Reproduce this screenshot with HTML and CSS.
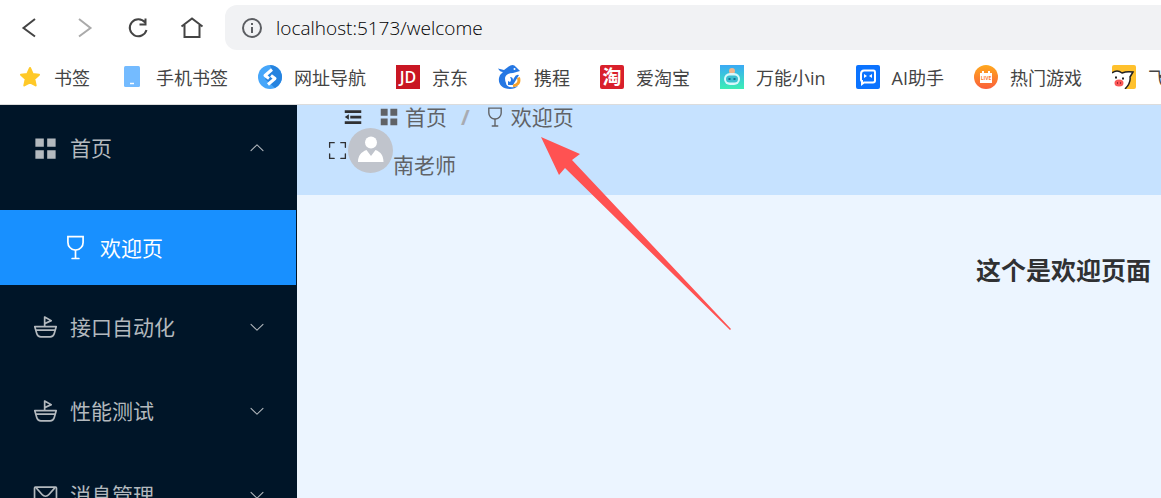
FILE: index.html
```html
<!DOCTYPE html>
<html lang="zh">
<head>
  <meta charset="UTF-8">
  <meta name="viewport" content="width=device-width, initial-scale=1.0">
  <title>欢迎页</title>
  <link rel="stylesheet" href="styles.css">
</head>
<body>
  <!-- shared icons -->
  <svg class="sprite" aria-hidden="true">
    <symbol id="menu" viewBox="0 0 1024 1024"><path d="M128 128h320v320H128zM576 128h320v320H576zM128 576h320v320H128zM576 576h320v320H576z"/></symbol>
    <symbol id="goblet" viewBox="0 0 1024 1024"><path d="M544 638.912V896h96a32 32 0 1 1 0 64H384a32 32 0 1 1 0-64h96V638.848A320 320 0 0 1 192 320V64h640v256a320 320 0 0 1-288 318.912zM256 319.68a256.128 256.128 0 0 0 256 256A256 256 0 0 0 768 320V128H256v191.68z"/></symbol>
    <symbol id="ship" viewBox="0 0 1024 1024"><path d="M512 386.88V448h405.568a32 32 0 0 1 30.72 40.768l-76.48 267.968A192 192 0 0 1 687.168 896H336.832a192 192 0 0 1-184.64-139.264L75.648 488.768A32 32 0 0 1 106.368 448H448V117.888a32 32 0 0 1 47.36-28.096l13.888 7.616L512 96v2.88l231.68 126.4a32 32 0 0 1-2.048 57.216L512 386.88zm0-70.272 144.768-65.792L512 171.84v144.768zM512 512H148.864l18.24 64H856.96l18.24-64H512zM185.408 640l28.352 99.2A128 128 0 0 0 336.832 832h350.336a128 128 0 0 0 123.072-92.8l28.352-99.2H185.408z"/></symbol>
    <symbol id="message" viewBox="0 0 1024 1024"><path d="M128 224v512a64 64 0 0 0 64 64h640a64 64 0 0 0 64-64V224H128zm0-64h768a64 64 0 0 1 64 64v512a128 128 0 0 1-128 128H192A128 128 0 0 1 64 736V224a64 64 0 0 1 64-64z"/><path d="M904 224 656.512 506.88a192 192 0 0 1-289.024 0L120 224h784zm-698.944 0 210.56 240.704a128 128 0 0 0 192.704 0L818.944 224H205.056z"/></symbol>
    <symbol id="down" viewBox="0 0 1024 1024"><path d="M831.872 340.864 512 652.672 192.128 340.864a30.592 30.592 0 0 0-42.752 0 29.12 29.12 0 0 0 0 41.6L489.664 714.24a32 32 0 0 0 44.672 0l340.288-331.712a29.12 29.12 0 0 0 0-41.728 30.592 30.592 0 0 0-42.752.064z"/></symbol>
  </svg>

  <header class="browser">
    <div class="toolbar">
      <button class="tool" aria-label="后退"><svg viewBox="0 0 24 24"><path d="M17 3 5.500 12 17 20.500"/></svg></button>
      <button class="tool disabled" aria-label="前进"><svg viewBox="0 0 24 24"><path d="M7 3 18.500 12 7 20.500"/></svg></button>
      <button class="tool" aria-label="刷新"><svg viewBox="0 0 24 24"><path d="M19 6.500A8.500 8.500 0 1 0 20.500 14M19.500 2.500v6h-6"/></svg></button>
      <button class="tool" aria-label="主页"><svg viewBox="0 0 24 24"><path d="M1.500 10.500 12 2.500l10.500 8M4.500 9v12h15V9"/></svg></button>
      <div class="address">
        <svg viewBox="0 0 20 20"><circle cx="10" cy="10" r="9"/><path d="M10 9v6M10 5v2"/></svg>
        <input type="text" value="localhost:5173/welcome" aria-label="地址栏">
      </div>
    </div>
    <nav class="bookmarks">
      <a href="#"><svg viewBox="0 0 24 24"><path fill="#ffc928" stroke="#ffc928" stroke-width="2" stroke-linejoin="round" d="m12 3 2.700 6 6.300.7-4.700 4.300 1.400 6.400L12 17.300l-5.700 3.100L7.700 14 3 9.700 9.300 9z"/></svg>书签</a>
      <a href="#"><svg viewBox="0 0 24 24"><rect x="4" y="1" width="16" height="21" rx="1.500" fill="#74bbff"/><path d="M10 18.500h4" stroke="#fff" stroke-width="1.500"/></svg>手机书签</a>
      <a href="#"><svg viewBox="0 0 24 24"><circle cx="12" cy="12" r="12" fill="#46a6fa"/><path fill="#2683df" d="M12 0a12 12 0 0 1 5 22.900L7 14l7-8z"/><path d="M14 4.500 7 10.500l4 3M10 19.500l7-6-4-3" fill="none" stroke="#fff" stroke-width="3" stroke-linejoin="round"/></svg>网址导航</a>
      <a href="#"><svg viewBox="0 0 24 24"><path fill="#c91623" d="M0 0h24v24H0z"/><text class="mark-jd" x="12" y="18">JD</text></svg>京东</a>
      <a href="#"><svg viewBox="0 0 24 24"><path fill="#2577e3" d="M0 3.500 6 5l4-3q5-4 8 0l4 4-7 2q-7 0-8 5 0 3 1 5c0 3 4 5 8 4l4-1q-3 3-8 3C4 24 0 19 1 13q1-4 4-6Q2 7 0 3.500z"/><path fill="#2577e3" d="M12 12q2 3 0 5l-2-1v4h5l3-5 3-5q-3-1-5 3l-1 2q0-3-3-3z"/><circle cx="16.500" cy="4" r="1" fill="#fff"/><path d="M20.500 12.500c1.500 5-1 8-5.500 8.500" fill="none" stroke="#f7a22b" stroke-width="3"/></svg>携程</a>
      <a href="#"><svg viewBox="0 0 24 24"><rect width="24" height="24" rx="2" fill="#d9202b"/><text class="mark-tao" x="12" y="19">淘</text></svg>爱淘宝</a>
      <a href="#"><svg viewBox="0 0 24 24"><defs><linearGradient id="robot" x2="0" y2="1"><stop stop-color="#3aa9f5"/><stop offset="1" stop-color="#3ceeb5"/></linearGradient></defs><path fill="url(#robot)" d="M0 0h24v24H0z"/><circle cx="12" cy="6" r="3" fill="#f1b48b"/><rect x="4" y="8" width="16" height="12" rx="6" fill="#d9f8fb"/><rect x="6" y="10.500" width="12" height="7" rx="3.500" fill="#3bbfd0"/><path d="M9.500 13v2M14.500 13v2" stroke="#176f91" stroke-width="2"/></svg>万能小in</a>
      <a href="#"><svg viewBox="0 0 24 24"><rect width="24" height="24" rx="2" fill="#0b73ff"/><path d="M8 5.500h9.500q1.500 0 1.500 2v8q0 2-2 2H8l-2 1.500v-3q-1 0-1-1V9q0-3.500 3-3.500z" fill="none" stroke="#fff" stroke-width="2"/><path d="m8 9 3 2-3 2zM16 9l-3 2 3 2z" fill="#fff"/></svg>AI助手</a>
      <a href="#"><svg viewBox="0 0 24 24"><defs><linearGradient id="live" x2="0" y2="1"><stop stop-color="#ffa91e"/><stop offset="1" stop-color="#fa5f3b"/></linearGradient></defs><circle cx="12" cy="12" r="12" fill="url(#live)"/><path d="M6 8h2V6h2v2h4V6h2v2h2v10H6z" fill="#fff"/><text class="mark-live" x="12" y="15">LIVE</text></svg>热门游戏</a>
      <a href="#"><svg viewBox="0 0 24 24"><rect width="24" height="24" rx="2" fill="#ffc12d"/><path d="M0 8q5-4 10 0 5-2 11-1l-3 5q1 6-5 12H0z" fill="#fff"/><path d="M0 8q5-4 10 0 5-2 11-1l-3 5q1 6-5 12" fill="none" stroke="#222" stroke-width="1.500"/><path d="M3 12.500h2M10 13.500h2" stroke="#222" stroke-width="2"/><ellipse cx="7" cy="18" rx="4.500" ry="3.500" fill="#fa5757"/><path d="M5.500 17v2M8.500 17v2" stroke="#9e2630"/></svg>飞猪</a>
    </nav>
  </header>

  <div class="layout">
    <nav class="sidebar">
      <button class="menu-item"><svg class="icon"><use href="#menu"/></svg><span>首页</span><svg class="caret open"><use href="#down"/></svg></button>
      <div class="submenu">
        <a class="menu-item active" href="#"><svg class="icon"><use href="#goblet"/></svg><span>欢迎页</span></a>
      </div>
      <button class="menu-item"><svg class="icon"><use href="#ship"/></svg><span>接口自动化</span><svg class="caret"><use href="#down"/></svg></button>
      <button class="menu-item"><svg class="icon"><use href="#ship"/></svg><span>性能测试</span><svg class="caret"><use href="#down"/></svg></button>
      <button class="menu-item"><svg class="icon"><use href="#message"/></svg><span>消息管理</span><svg class="caret"><use href="#down"/></svg></button>
    </nav>

    <div class="container">
      <header class="header">
        <div class="header-top">
          <button class="fold" aria-label="折叠菜单"><svg viewBox="0 0 1024 1024"><path d="M896 192H128v128h768V192zm0 256H384v128h512V448zm0 256H128v128h768V704zM320 384 128 512l192 128V384z"/></svg></button>
          <div class="breadcrumb">
            <a class="crumb" href="#"><svg><use href="#menu"/></svg>首页</a>
            <span class="separator">/</span>
            <a class="crumb" href="#"><svg><use href="#goblet"/></svg>欢迎页</a>
          </div>
        </div>
        <div class="user">
          <button class="fullscreen" aria-label="全屏"><svg viewBox="0 0 1024 1024"><path d="m160 96.064 192 .192a32 32 0 0 1 0 64l-192-.192V352a32 32 0 0 1-64 0V96h64v.064zm0 831.872V928H96V672a32 32 0 1 1 64 0v191.936l192-.192a32 32 0 1 1 0 64l-192 .192zM864 96.064V96h64v256a32 32 0 1 1-64 0V160.064l-192 .192a32 32 0 1 1 0-64l192-.192zm0 831.872-192-.192a32 32 0 0 1 0-64l192 .192V672a32 32 0 1 1 64 0v256h-64v-.064z"/></svg></button>
          <svg class="avatar" viewBox="0 0 45 45"><circle cx="22.500" cy="22.500" r="22.500" fill="#c0c4cc"/><circle cx="23" cy="14.500" r="6" fill="#fff"/><path fill="#fff" d="M10 34c0-6 3-10 8.500-12l4.500 6 4.500-6C33 24 35.500 28 35.500 34z"/></svg>
          <span class="username">南老师</span>
        </div>
      </header>
      <main class="main">
        <h1>这个是欢迎页面</h1>
      </main>
    </div>
  </div>

  <svg class="pointer" viewBox="0 0 190 194" aria-hidden="true"><path d="M0 0 39 17l-8 6 159 169-1 1L24 31l-6 7z"/></svg>
</body>
</html>
```
FILE: styles.css
```css
* {
  box-sizing: border-box;
}
body {
  margin: 0;
  height: 100vh;
  overflow: hidden;
  display: flex;
  flex-direction: column;
  position: relative;
  font-family: "Open Sans", "Noto Sans CJK SC", sans-serif;
  color: #303133;
}
button {
  border: none;
  padding: 0;
  background: none;
  font: inherit;
  color: inherit;
  cursor: pointer;
}
a {
  color: inherit;
  text-decoration: none;
}
svg {
  display: block;
  flex-shrink: 0;
  fill: currentColor;
}
.sprite {
  position: absolute;
  width: 0;
  height: 0;
}

/* browser bar */
.browser {
  flex-shrink: 0;
  background: #fff;
  border-bottom: 1px solid #dcdcdc;
}
.toolbar {
  display: flex;
  align-items: center;
  gap: 30px;
  padding: 5px 0 0 18px;
}
.tool svg {
  width: 24px;
  height: 24px;
  fill: none;
  stroke: #444;
  stroke-width: 2;
}
.tool.disabled svg {
  stroke: #aaa;
}
.address {
  flex: 1;
  height: 45px;
  margin-left: -9px;
  padding-left: 17px;
  display: flex;
  align-items: center;
  gap: 14px;
  background: #f1f2f4;
  border-radius: 12px 0 0 12px;
}
.address svg {
  width: 20px;
  height: 20px;
  fill: none;
  stroke: #5c5e62;
  stroke-width: 2;
}
.address input {
  flex: 1;
  border: none;
  outline: none;
  padding: 0;
  background: none;
  font-family: inherit;
  font-size: 19px;
  font-weight: 300;
  color: #000;
}
.bookmarks {
  display: flex;
  gap: 30px;
  height: 54px;
  padding-left: 18px;
  overflow: hidden;
}
.bookmarks a {
  display: flex;
  align-items: center;
  gap: 12px;
  flex-shrink: 0;
  font-size: 18px;
  color: #444;
  white-space: nowrap;
}
.bookmarks svg {
  width: 24px;
  height: 24px;
}
.bookmarks text {
  fill: #fff;
  text-anchor: middle;
}
.mark-jd {
  font-size: 16px;
  font-weight: 600;
}
.mark-tao {
  font-size: 19px;
  font-weight: 700;
}
.bookmarks .mark-live {
  font-size: 5px;
  font-weight: 700;
  fill: #fa7c31;
}

/* page */
.layout {
  flex: 1;
  min-height: 0;
  display: flex;
}
.sidebar {
  width: 297px;
  flex-shrink: 0;
  padding-top: 1px;
  overflow: hidden;
  background: #001528;
  border-right: 1px solid #001528;
  color: #b3b9be;
}
.menu-item {
  width: 100%;
  height: 84px;
  padding: 0 30px 0 32px;
  display: flex;
  align-items: center;
  gap: 11px;
  font-size: 21px;
  text-align: left;
}
.menu-item span {
  padding-bottom: 2px;
}
.menu-item .icon {
  width: 27px;
  height: 27px;
}
.menu-item .caret {
  width: 18px;
  height: 18px;
  margin-left: auto;
}
.menu-item .caret.open {
  transform: rotate(180deg);
}
.submenu {
  padding-top: 20px;
}
.submenu .menu-item {
  height: 75px;
  padding-left: 62px;
}
.menu-item.active {
  background: #1890ff;
  color: #fff;
}
.container {
  flex: 1;
  min-width: 0;
  display: flex;
  flex-direction: column;
}
.header {
  height: 90px;
  padding: 0 30px;
  background: #c6e2ff;
  color: #606266;
  font-size: 21px;
}
.header-top {
  display: flex;
  align-items: center;
  gap: 14px;
  height: 23px;
  padding-left: 15px;
}
.fold svg {
  width: 22px;
  height: 22px;
  color: #303133;
}
.breadcrumb {
  display: flex;
  align-items: center;
  gap: 14px;
  line-height: 24px;
}
.crumb {
  display: flex;
  align-items: center;
  gap: 5px;
}
.crumb svg {
  width: 22px;
  height: 22px;
}
.separator {
  font-weight: 700;
  color: #a8abb2;
}
.user {
  display: flex;
  align-items: flex-start;
}
.fullscreen {
  padding-top: 12px;
  color: #303133;
}
.fullscreen svg {
  width: 21px;
  height: 21px;
}
.avatar {
  width: 45px;
  height: 45px;
}
.username {
  padding-top: 23px;
  line-height: 28px;
}
.main {
  flex: 1;
  padding: 57px 10px 0 30px;
  background: #ecf5ff;
}
.main h1 {
  margin: 0;
  font-size: 25px;
  line-height: 36px;
  text-align: right;
}

/* red arrow over the page */
.pointer {
  position: absolute;
  left: 541px;
  top: 137px;
  width: 190px;
  height: 194px;
  fill: #ff5252;
}
```
